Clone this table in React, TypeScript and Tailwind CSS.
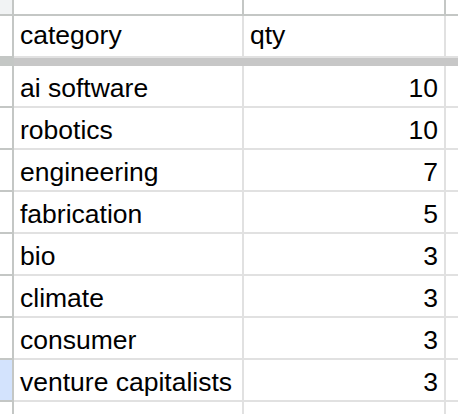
import React from "react";

const rows = [
  { category: "ai software", qty: 10 },
  { category: "robotics", qty: 10 },
  { category: "engineering", qty: 7 },
  { category: "fabrication", qty: 5 },
  { category: "bio", qty: 3 },
  { category: "climate", qty: 3 },
  { category: "consumer", qty: 3 },
  { category: "venture capitalists", qty: 3, selected: true },
  { category: "electronics", qty: 3 },
];

const DataRow: React.FC<{ category: string; qty: number; selected?: boolean }> = ({ category, qty, selected }) => (
  <div className="flex h-[42px] shrink-0">
    <div className={`w-[12px] shrink-0 border-b-2 border-[#c4c7c5] ${selected ? "bg-[#d3e3fd]" : "bg-white"}`} />
    <div className="w-[2px] shrink-0 bg-[#c4c7c5]" />
    <div className="w-[228px] shrink-0 flex items-end pl-[6px] pb-[3px] border-b-2 border-[#e1e1e1] leading-[30px] whitespace-nowrap">
      {category}
    </div>
    <div className="w-[2px] shrink-0 bg-[#e1e1e1]" />
    <div className="w-[200px] shrink-0 flex items-end justify-end pr-[6px] pb-[3px] border-b-2 border-[#e1e1e1] leading-[30px]">
      {qty}
    </div>
    <div className="w-[2px] shrink-0 bg-[#e1e1e1]" />
    <div className="flex-1 border-b-2 border-[#e1e1e1]" />
  </div>
);

export default function App() {
  return (
    <div className="w-[458px] h-[414px] overflow-hidden bg-white text-black text-[26.5px] font-['Liberation_Sans',Arial,sans-serif] flex flex-col">
      {/* column header strip */}
      <div className="flex h-[16px] shrink-0 border-b-2 border-[#c4c7c5]">
        <div className="w-[12px] shrink-0 bg-[#f1f3f4]" />
        <div className="w-[2px] shrink-0 bg-[#c4c7c5]" />
        <div className="w-[228px] shrink-0" />
        <div className="w-[2px] shrink-0 bg-[#c4c7c5]" />
        <div className="w-[200px] shrink-0" />
        <div className="w-[2px] shrink-0 bg-[#c4c7c5]" />
        <div className="flex-1" />
      </div>

      {/* header row */}
      <div className="flex h-[40px] shrink-0">
        <div className="w-[12px] shrink-0 bg-white" />
        <div className="w-[2px] shrink-0 bg-[#c4c7c5]" />
        <div className="w-[228px] shrink-0 flex items-end pl-[6px] pb-[6px] leading-[30px]">category</div>
        <div className="w-[2px] shrink-0 bg-[#e1e1e1]" />
        <div className="w-[200px] shrink-0 flex items-end pl-[6px] pb-[6px] leading-[30px]">qty</div>
        <div className="w-[2px] shrink-0 bg-[#e1e1e1]" />
        <div className="flex-1" />
      </div>

      {/* frozen row divider */}
      <div className="flex h-[10px] shrink-0">
        <div className="w-[14px] shrink-0 bg-[#c4c7c5]" />
        <div className="flex-1 flex flex-col">
          <div className="h-[2px] bg-[#e1e1e1]" />
          <div className="flex-1 bg-[#c7c7c7]" />
        </div>
      </div>

      {rows.map((r) => (
        <DataRow key={r.category} category={r.category} qty={r.qty} selected={r.selected} />
      ))}
    </div>
  );
}
